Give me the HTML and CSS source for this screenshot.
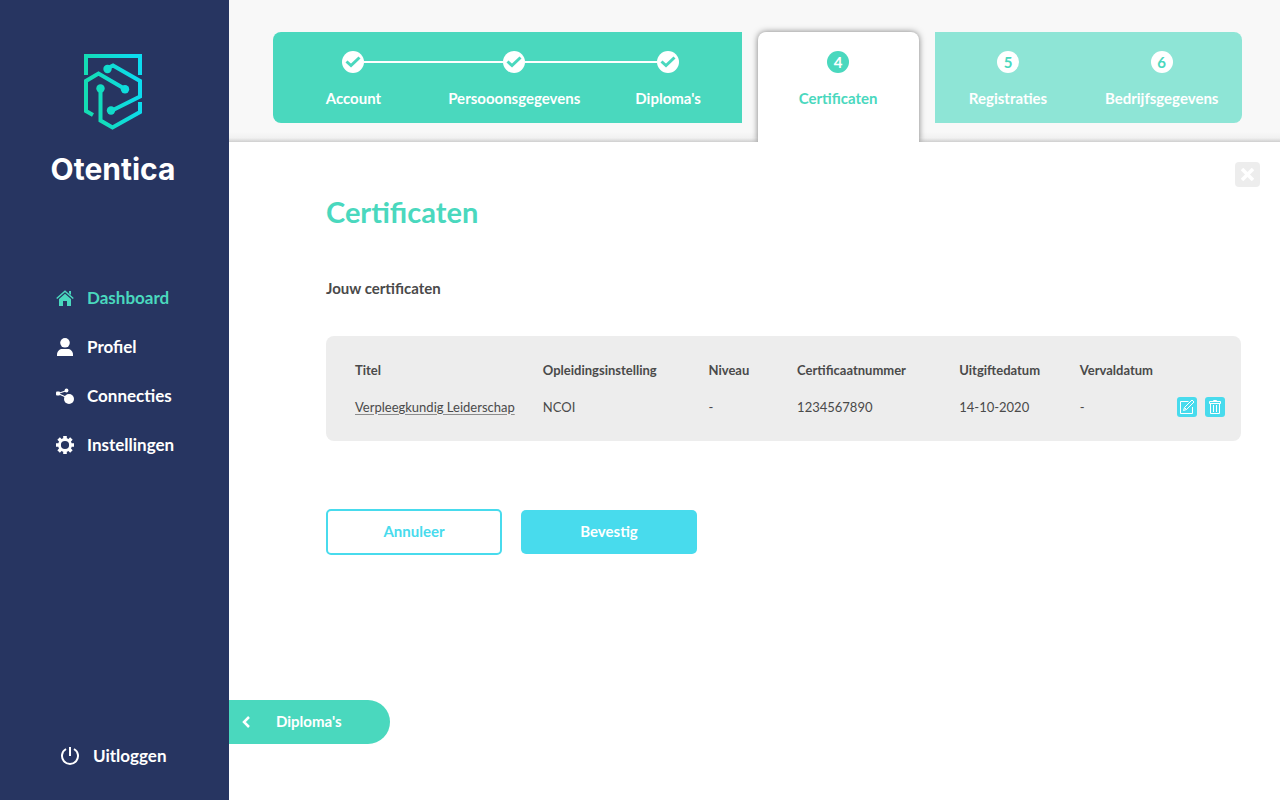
FILE: index.html
```html
<!DOCTYPE html>
<html lang="nl">
<head>
<meta charset="utf-8">
<meta name="viewport" content="width=device-width, initial-scale=1">
<title>Otentica - Certificaten</title>
<link rel="stylesheet" href="styles.css">
</head>
<body>
<div class="app">
  <aside class="sidebar">
    <div class="brand">
      <svg class="brand-mark" width="60" height="78" viewBox="0 0 60 78" fill="none" aria-hidden="true">
        <defs>
          <linearGradient id="brand-gradient" gradientUnits="userSpaceOnUse" x1="8" y1="39" x2="56" y2="30">
            <stop offset="0" stop-color="#14dcb4"/>
            <stop offset="1" stop-color="#0cdcf0"/>
          </linearGradient>
        </defs>
        <g stroke="url(#brand-gradient)" stroke-width="4">
          <path d="M3 22V3H57V22"/>
          <path d="M10 62 3 58V28L15.500 20.500 42 36"/>
          <path d="M25 15 30 12.500 57 28V43.500L28 58"/>
          <path d="M17.500 36V67.500L29.500 74.500 57 59V49"/>
        </g>
        <g fill="url(#brand-gradient)">
          <circle cx="24.500" cy="16" r="4.200"/>
          <circle cx="42" cy="36.300" r="4.200"/>
          <circle cx="17.500" cy="35.500" r="4.200"/>
          <circle cx="28" cy="57.500" r="4.200"/>
        </g>
      </svg>
      <span class="brand-name">Otentica</span>
    </div>
    <nav class="menu">
      <a class="menu-link active" href="#">
        <svg width="18" height="16" viewBox="0 0 18 16" aria-hidden="true"><path d="M9 3.700 3 9V16H7V11H11V16H15V9Z" fill="currentColor"/><path d="M.7 8.500 9 1.300 17.300 8.500" fill="none" stroke="currentColor" stroke-width="1.500"/><path d="M13 1H15V5L13 3.300Z" fill="currentColor"/></svg>
        Dashboard
      </a>
      <a class="menu-link" href="#">
        <svg width="18" height="18" viewBox="0 0 18 18" fill="currentColor" aria-hidden="true"><circle cx="9" cy="4.800" r="4.800"/><path d="M1 18V16.500C1 13 4 11 6 11H12C14 11 17 13 17 16.500V18Z"/></svg>
        Profiel
      </a>
      <a class="menu-link" href="#">
        <svg width="18" height="18" viewBox="0 0 18 18" fill="currentColor" aria-hidden="true"><path d="M2 6.500 11 3.500M2 6.500 12 11" stroke="currentColor" stroke-width="1.300"/><rect y="4.500" width="4" height="4" rx="1"/><circle cx="10.500" cy="3.500" r="1.900"/><circle cx="13" cy="12" r="5"/></svg>
        Connecties
      </a>
      <a class="menu-link" href="#">
        <svg width="18" height="18" viewBox="0 0 18 18" fill="none" stroke="currentColor" aria-hidden="true"><circle cx="9" cy="9" r="5.500" stroke-width="2.800"/><path d="M9 0V3M9 15V18M0 9H3M15 9H18M2.600 2.600 4.800 4.800M13.200 13.200 15.400 15.400M2.600 15.400 4.800 13.200M13.200 4.800 15.400 2.600" stroke-width="3.600"/></svg>
        Instellingen
      </a>
    </nav>
    <a class="menu-link logout" href="#">
      <svg width="20" height="20" viewBox="0 0 20 20" fill="none" stroke="currentColor" stroke-width="2" aria-hidden="true"><path d="M10 1V10M6 3A8 8 0 1 0 14 3"/></svg>
      Uitloggen
    </a>
  </aside>

  <div class="page">
    <header class="topbar">
      <ol class="wizard">
        <li class="wizard-group done">
          <ol class="steps">
            <li class="step wide">
              <span class="track"><i class="line hidden"></i><span class="marker"><svg width="16" height="12" viewBox="0 0 16 12" aria-hidden="true"><path d="M1.500 5.500 6 9.500 14.500 1.500"/></svg></span><i class="line"></i></span>
              <span class="step-label">Account</span>
            </li>
            <li class="step wide">
              <span class="track"><i class="line"></i><span class="marker"><svg width="16" height="12" viewBox="0 0 16 12" aria-hidden="true"><path d="M1.500 5.500 6 9.500 14.500 1.500"/></svg></span><i class="line"></i></span>
              <span class="step-label">Persooonsgegevens</span>
            </li>
            <li class="step">
              <span class="track"><i class="line"></i><span class="marker"><svg width="16" height="12" viewBox="0 0 16 12" aria-hidden="true"><path d="M1.500 5.500 6 9.500 14.500 1.500"/></svg></span><i class="line hidden"></i></span>
              <span class="step-label">Diploma's</span>
            </li>
          </ol>
        </li>
        <li class="wizard-group current" aria-current="step">
          <div class="step">
            <span class="track"><span class="marker">4</span></span>
            <span class="step-label">Certificaten</span>
          </div>
        </li>
        <li class="wizard-group upcoming">
          <ol class="steps">
            <li class="step">
              <span class="track"><span class="marker">5</span></span>
              <span class="step-label">Registraties</span>
            </li>
            <li class="step wide">
              <span class="track"><span class="marker">6</span></span>
              <span class="step-label">Bedrijfsgegevens</span>
            </li>
          </ol>
        </li>
      </ol>
    </header>

    <main class="content">
      <button class="close" type="button" aria-label="Sluiten">
        <svg width="13" height="13" viewBox="0 0 13 13" fill="none" stroke="currentColor" stroke-width="3.500" aria-hidden="true"><path d="M1 1 12 12M12 1 1 12"/></svg>
      </button>
      <section class="certificates">
        <h1 class="title">Certificaten</h1>
        <h2 class="subtitle">Jouw certificaten</h2>
        <div class="card">
          <table class="table">
            <colgroup><col class="c-title"><col class="c-school"><col class="c-level"><col class="c-number"><col class="c-issued"><col class="c-expires"><col class="c-actions"></colgroup>
            <thead>
              <tr><th scope="col">Titel</th><th scope="col">Opleidingsinstelling</th><th scope="col">Niveau</th><th scope="col">Certificaatnummer</th><th scope="col">Uitgiftedatum</th><th scope="col">Vervaldatum</th><td></td></tr>
            </thead>
            <tbody>
              <tr>
                <td><a class="cert-link" href="#">Verpleegkundig Leiderschap</a></td>
                <td>NCOI</td><td>-</td><td>1234567890</td><td>14-10-2020</td><td>-</td>
                <td>
                  <div class="actions">
                    <button class="icon-button" type="button" aria-label="Bewerken">
                      <svg width="16" height="16" viewBox="0 0 16 16" fill="none" stroke="currentColor" aria-hidden="true"><path d="M9.500 2.500H1.500V14.500H13.500V8"/><path d="M4.500 11.500 5.500 8.500 13 1 15 3 7.500 10.500ZM5.500 8.500 7.500 10.500"/></svg>
                    </button>
                    <button class="icon-button" type="button" aria-label="Verwijderen">
                      <svg width="16" height="16" viewBox="0 0 16 16" fill="none" stroke="currentColor" aria-hidden="true"><path d="M2.500 2.500H13.500V4.500H2.500ZM6.500 2.500V1.500H9.500V2.500M3.500 4.500V14.500H12.500V4.500M6.500 6V13M9.500 6V13"/></svg>
                    </button>
                  </div>
                </td>
              </tr>
            </tbody>
          </table>
        </div>
        <div class="form-actions">
          <button class="button outline" type="button">Annuleer</button>
          <button class="button solid" type="button">Bevestig</button>
        </div>
      </section>
      <button class="back" type="button">
        <svg width="8" height="12" viewBox="0 0 8 12" fill="none" stroke="currentColor" stroke-width="2.500" aria-hidden="true"><path d="M7 1 2 6 7 11"/></svg>
        <span class="back-label">Diploma's</span>
      </button>
    </main>
  </div>
</div>
</body>
</html>
```
FILE: styles.css
```css
* {
  box-sizing: border-box;
}

body {
  margin: 0;
  font-family: Lato, "Liberation Sans", sans-serif;
  font-size: 13px;
  color: #4a4a4a;
  background: #fff;
}

ol {
  margin: 0;
  padding: 0;
  list-style: none;
}

button {
  padding: 0;
  border: 0;
  font: inherit;
  cursor: pointer;
}

.app {
  display: flex;
  min-height: 100vh;
}

/* Sidebar */
.sidebar {
  display: flex;
  flex-direction: column;
  flex: 0 0 229px;
  padding: 53px 0 32px;
  color: #fff;
  background: #273561;
}

.brand {
  display: flex;
  flex-direction: column;
  align-items: center;
  gap: 20px;
  padding-right: 3px;
}

.brand-name {
  font-family: Inter, "Liberation Sans", sans-serif;
  font-size: 30px;
  font-weight: 700;
  line-height: 36px;
}

.menu {
  display: flex;
  flex-direction: column;
  gap: 25px;
  margin-top: 99px;
  padding-left: 56px;
}

.menu-link {
  display: flex;
  align-items: center;
  gap: 13px;
  font-size: 17px;
  font-weight: 700;
  line-height: 24px;
  color: #fff;
  text-decoration: none;
}

.menu-link.active {
  color: #4ad8be;
}

.logout {
  margin-top: auto;
  padding-left: 60px;
}

/* Wizard */
.page {
  display: flex;
  flex: 1;
  flex-direction: column;
  min-width: 0;
}

.topbar {
  padding: 32px 38px 0 44px;
  overflow: hidden;
  background: linear-gradient(#f8f8f8 calc(100% - 10px), #f1f1f1 calc(100% - 4px), #cfcfcf);
}

.wizard {
  display: flex;
  align-items: flex-start;
  gap: 16px;
}

.wizard-group {
  padding: 19px 0 15px;
  color: #fff;
}

.done {
  flex: 468;
  border-radius: 8px 0 0 8px;
  background: #4ad8be;
}

.current {
  flex: 161;
  padding-bottom: 34px;
  border-radius: 8px 8px 0 0;
  color: #4ad8be;
  background: #fff;
  box-shadow: 0 0 6px rgba(0, 0, 0, 0.5);
}

.upcoming {
  flex: 307;
  border-radius: 0 8px 8px 0;
  background: #8ee5d6;
}

.steps {
  display: flex;
}

.step {
  flex: 147;
  text-align: center;
}

.step.wide {
  flex: 161;
}

.track {
  display: flex;
  align-items: center;
  justify-content: center;
}

.line {
  flex: 1;
  height: 2px;
  background: #fff;
}

.line.hidden {
  visibility: hidden;
}

.marker {
  display: flex;
  align-items: center;
  justify-content: center;
  width: 22px;
  height: 22px;
  border-radius: 50%;
  font-size: 15px;
  font-weight: 700;
  color: #4ad8be;
  background: #fff;
}

.marker svg {
  fill: none;
  stroke: #4ad8be;
  stroke-width: 3;
}

.current .marker {
  color: #fff;
  background: #4ad8be;
}

.step-label {
  display: block;
  margin-top: 15px;
  font-size: 15px;
  font-weight: 700;
  line-height: 20px;
}

/* Content */
.content {
  display: flex;
  flex: 1;
  flex-direction: column;
  align-items: flex-start;
  padding: 20px 0 56px;
}

.close {
  display: grid;
  place-items: center;
  align-self: flex-end;
  width: 25px;
  height: 25px;
  margin-right: 20px;
  border-radius: 4px;
  color: #fff;
  background: #ededed;
}

.certificates {
  align-self: stretch;
  padding: 7px 39px 40px 97px;
}

.title {
  margin: 0;
  font-size: 29px;
  line-height: 36px;
  color: #4ad8be;
}

.subtitle {
  margin: 48px 0 38px;
  font-size: 15px;
  line-height: 20px;
}

.card {
  padding: 15px 0 16px 29px;
  border-radius: 8px;
  background: #ededed;
}

.table {
  width: 100%;
  table-layout: fixed;
  border-collapse: collapse;
  line-height: 20px;
}

.table th,
.table td {
  height: 37px;
  padding: 0;
  text-align: left;
  white-space: nowrap;
}

.c-title { width: 21.2%; }
.c-school { width: 18.7%; }
.c-level { width: 10%; }
.c-number { width: 18.3%; }
.c-issued { width: 13.6%; }
.c-expires { width: 11%; }

.cert-link {
  color: inherit;
  text-decoration-color: #8c8c8c;
  text-underline-offset: 2px;
}

.actions {
  display: flex;
  gap: 8px;
}

.icon-button {
  display: grid;
  place-items: center;
  width: 20px;
  height: 20px;
  border-radius: 3px;
  color: #fff;
  background: #48dbed;
}

.form-actions {
  display: flex;
  align-items: center;
  gap: 19px;
  margin-top: 68px;
}

.button {
  width: 176px;
  height: 44px;
  padding-bottom: 3px;
  border-radius: 5px;
  font-size: 15px;
  font-weight: 700;
}

.button.outline {
  height: 46px;
  border: 2px solid #48dbed;
  color: #48dbed;
  background: #fff;
}

.button.solid {
  color: #fff;
  background: #48dbed;
}

.back {
  display: flex;
  align-items: center;
  gap: 26px;
  width: 161px;
  height: 44px;
  margin-top: auto;
  padding-left: 13px;
  border-radius: 0 22px 22px 0;
  font-size: 15px;
  font-weight: 700;
  color: #fff;
  background: #4ad8be;
}

.back-label {
  padding-bottom: 2px;
}
```
